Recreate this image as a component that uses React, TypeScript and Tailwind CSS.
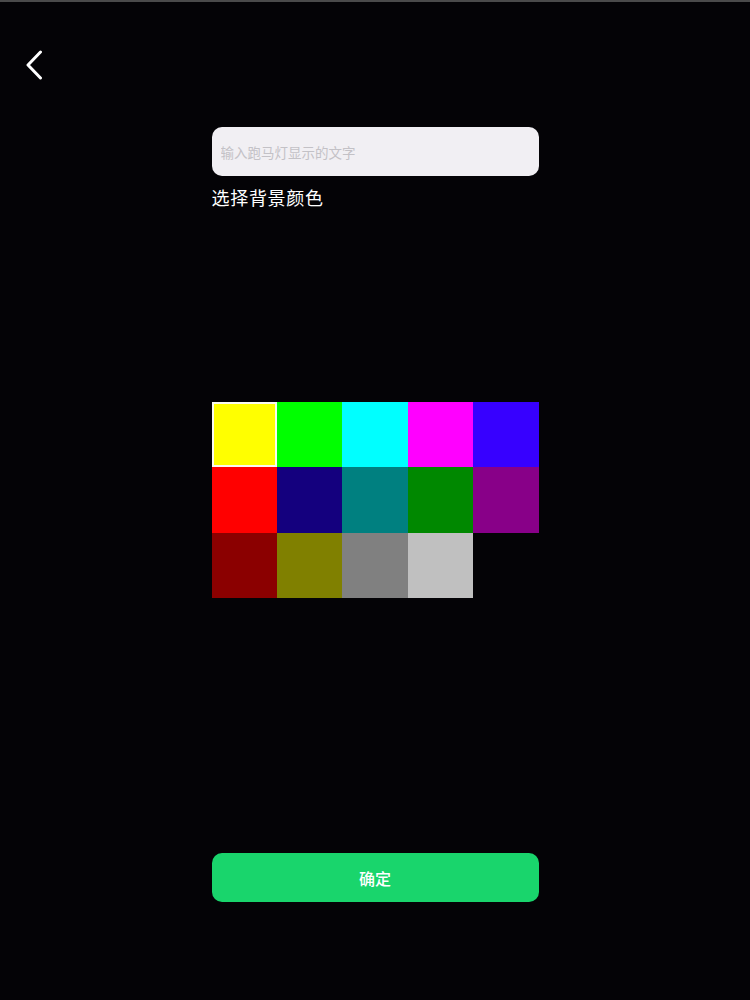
const colors = [
  "#ffff00",
  "#00ff00",
  "#00ffff",
  "#ff00ff",
  "#3700ff",
  "#ff0000",
  "#14007e",
  "#008080",
  "#008800",
  "#880088",
  "#8b0000",
  "#808000",
  "#808080",
  "#c0c0c0",
]

export default function App() {
  return (
    <div
      className="h-[1000px] w-[750px] bg-[#040306] border-t-2 border-[#4a4a4a] flex flex-col"
      style={{ fontFamily: '"Noto Sans CJK SC", "Noto Sans", sans-serif' }}
    >
      <div className="pt-[48px] pl-[25px] h-[79px]">
        <svg width="20" height="30" viewBox="0 0 20 30" fill="none">
          <path
            d="M15.5 2 L3 15 L15.5 28"
            stroke="white"
            strokeWidth="3"
            strokeLinecap="round"
            strokeLinejoin="round"
          />
        </svg>
      </div>

      <div className="w-[327px] mx-auto flex flex-col">
        <input
          className="mt-[46px] h-[49px] rounded-[10px] bg-[#f1eff3] px-[9px] text-[13.5px] text-black placeholder:text-[#c3c1c6] outline-none"
          placeholder="输入跑马灯显示的文字"
        />
        <div className="mt-[9px] text-[18px] leading-6 tracking-[0.7px] text-white">选择背景颜色</div>

        <div className="mt-[193px] grid grid-cols-5 grid-rows-3 h-[196px]">
          {colors.map((c, i) => (
            <div
              key={c}
              className={i === 0 ? "border-2 border-[#fafaf0]" : ""}
              style={{ backgroundColor: c }}
            />
          ))}
        </div>

        <button className="mt-[255px] h-[49px] rounded-[10px] bg-[#19d56c] text-white text-[16px] font-medium">
          确定
        </button>
      </div>
    </div>
  )
}
